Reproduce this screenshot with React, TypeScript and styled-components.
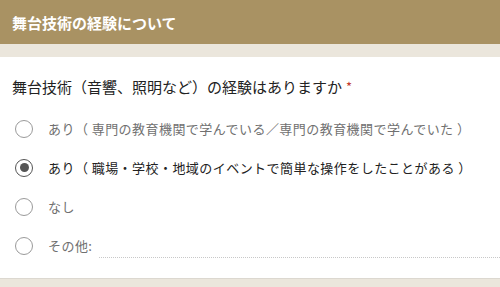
import React from "react";
import styled, { createGlobalStyle } from "styled-components";

const Global = createGlobalStyle`
  html, body { margin: 0; padding: 0; background: #ebe6dc; }
  body { font-family: "Noto Sans CJK JP", "Noto Sans", sans-serif; }
`;

const Page = styled.div`
  width: 500px;
  height: 287px;
  overflow: hidden;
  background: #ebe6dc;
`;

const Header = styled.div`
  height: 44px;
  background: #a99263;
  color: #fff;
  font-size: 15px;
  font-weight: 700;
  display: flex;
  align-items: center;
  padding-left: 12px;
`;

const Strip = styled.div`
  height: 13px;
  background: #ebe6dc;
`;

const Card = styled.div`
  background: #fff;
  padding: 20px 0 13px;
  border-bottom: 1px solid #dcd8d0;
`;

const Question = styled.div`
  font-size: 15px;
  line-height: 20px;
  color: #222;
  padding-left: 12px;
  margin-bottom: 12px;
`;

const Required = styled.span`
  color: #c43b2f;
  margin-left: 4px;
  font-size: 13px;
  vertical-align: top;
`;

const Option = styled.label<{ $selected?: boolean }>`
  display: flex;
  align-items: center;
  height: 39px;
  padding-left: 15px;
  gap: 15px;
  font-size: 13px;
  letter-spacing: 0.45px;
  color: ${(p) => (p.$selected ? "#222" : "#707070")};
`;

const Radio = styled.span<{ $checked?: boolean }>`
  box-sizing: border-box;
  width: 18px;
  height: 18px;
  border-radius: 50%;
  border: 1.5px solid ${(p) => (p.$checked ? "#555" : "#9a9a9a")};
  display: flex;
  align-items: center;
  justify-content: center;
  flex-shrink: 0;
  &::after {
    content: "";
    display: ${(p) => (p.$checked ? "block" : "none")};
    width: 9px;
    height: 9px;
    border-radius: 50%;
    background: #555;
  }
`;

const OtherInput = styled.div`
  flex: 1;
  align-self: stretch;
  margin-left: -8px;
  border-bottom: 1px dotted #c8c8c8;
  margin-bottom: 7px;
`;

const options = [
  "あり（ 専門の教育機関で学んでいる／専門の教育機関で学んでいた ）",
  "あり（ 職場・学校・地域のイベントで簡単な操作をしたことがある ）",
  "なし",
];

export default function App() {
  return (
    <Page>
      <Global />
      <Header>舞台技術の経験について</Header>
      <Strip />
      <Card>
        <Question>
          舞台技術（音響、照明など）の経験はありますか<Required>*</Required>
        </Question>
        {options.map((o, i) => (
          <Option key={i} $selected={i === 1}>
            <Radio $checked={i === 1} />
            <span>{o}</span>
          </Option>
        ))}
        <Option>
          <Radio />
          <span>その他:</span>
          <OtherInput />
        </Option>
      </Card>
    </Page>
  );
}
